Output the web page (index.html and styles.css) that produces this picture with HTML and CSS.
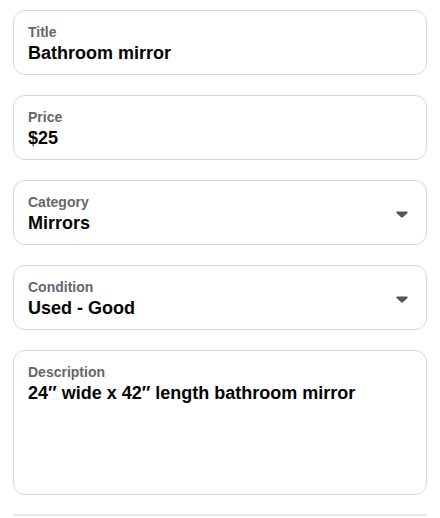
FILE: index.html
```html
<!DOCTYPE html>
<html lang="en">
<head>
  <meta charset="UTF-8" />
  <title>Listing details</title>
  <link rel="stylesheet" href="styles.css">
</head>
<body>
  <form class="listing-form">
    <label class="field">
      <span class="field-label">Title</span>
      <span class="field-value">Bathroom mirror</span>
    </label>

    <label class="field">
      <span class="field-label">Price</span>
      <span class="field-value">$25</span>
    </label>

    <div class="field select">
      <div class="field-text">
        <span class="field-label">Category</span>
        <span class="field-value">Mirrors</span>
      </div>
      <svg class="caret" width="12" height="7" viewBox="0 0 12 7">
        <path d="M1.2 0.5h9.6c0.8 0 1.2 0.9 0.7 1.5l-4.6 4.3c-0.5 0.4-1.3 0.4-1.8 0L0.5 2c-0.5-0.6-0.1-1.5 0.7-1.5z" fill="#555"/>
      </svg>
    </div>

    <div class="field select">
      <div class="field-text">
        <span class="field-label">Condition</span>
        <span class="field-value">Used - Good</span>
      </div>
      <svg class="caret" width="12" height="7" viewBox="0 0 12 7">
        <path d="M1.2 0.5h9.6c0.8 0 1.2 0.9 0.7 1.5l-4.6 4.3c-0.5 0.4-1.3 0.4-1.8 0L0.5 2c-0.5-0.6-0.1-1.5 0.7-1.5z" fill="#555"/>
      </svg>
    </div>

    <label class="field textarea">
      <span class="field-label">Description</span>
      <span class="field-value">24″ wide x 42″ length bathroom mirror</span>
    </label>

    <hr class="divider">
  </form>
</body>
</html>
```

FILE: styles.css
```css
html { height: 100%; }
body {
  margin: 0;
  background: #fff;
  color: #050505;
  font-family: 'Liberation Sans', Arial, sans-serif;
}

.listing-form {
  display: flex;
  flex-direction: column;
  gap: 20px;
  padding: 10px 13px 0;
}

.field {
  display: flex;
  flex-direction: column;
  height: 65px;
  box-sizing: border-box;
  padding: 12px 14px 9px;
  border: 1px solid #d8d8d8;
  border-radius: 12px;
}
.field.select {
  flex-direction: row;
  align-items: center;
  justify-content: space-between;
  padding-right: 18px;
}
.field-text { display: flex; flex-direction: column; }
.field.textarea { height: 145px; }

.field-label {
  font-size: 14px;
  line-height: 18px;
  font-weight: bold;
  color: #65676b;
}
.field-value {
  margin-top: 0;
  font-size: 18px;
  line-height: 24px;
  font-weight: bold;
  color: #050505;
}
.caret { display: block; }

.divider {
  margin: -1px 0 0;
  border: none;
  border-top: 2px solid #e8e8e8;
}
```
